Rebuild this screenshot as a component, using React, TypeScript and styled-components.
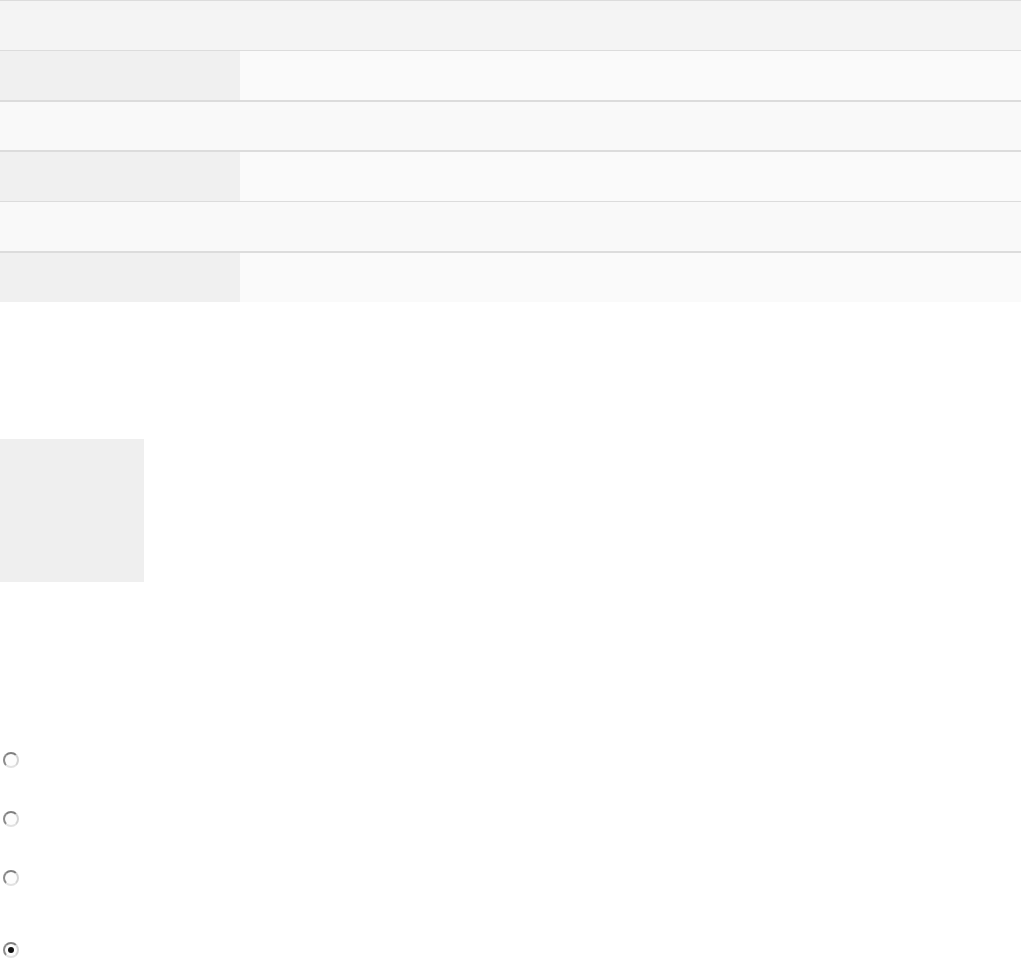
import React from "react";
import styled, { createGlobalStyle } from "styled-components";

const Global = createGlobalStyle`
    html, body {
        margin: 0;
        padding: 0;
        background: #ffffff;
        font-family: "Liberation Sans", Arial, sans-serif;
    }
`

const Page = styled.div`
    display: flex;
    flex-direction: column;
`

const Table = styled.div`
    display: flex;
    flex-direction: column;
    border-top: 1px solid #dcdcdc;
`

const Row = styled.div<{ $h: number, $border: number }>`
    display: grid;
    grid-template-columns: 240px 1fr;
    height: ${p => p.$h}px;
    background: #fafafa;
    border-bottom: ${p => p.$border}px solid #dcdcdc;
`

const FullRow = styled.div<{ $h: number, $border: number, $bg: string }>`
    height: ${p => p.$h}px;
    background: ${p => p.$bg};
    border-bottom: ${p => p.$border}px solid #dcdcdc;
`

const Label = styled.div`
    background: #f0f0f0;
`

const Value = styled.div`
    background: #fafafa;
`

const Thumb = styled.div`
    width: 144px;
    height: 143px;
    margin-top: 137px;
    background: #efefef;
`

const Options = styled.div`
    display: flex;
    flex-direction: column;
    margin-top: 170px;
    padding-left: 3px;
`

const Option = styled.label<{ $gap: number }>`
    display: flex;
    align-items: center;
    height: 16px;
    margin-bottom: ${p => p.$gap}px;
`

const Radio = styled.span<{ $checked?: boolean }>`
    position: relative;
    box-sizing: border-box;
    width: 16px;
    height: 16px;
    border-radius: 50%;
    border: 2px solid;
    border-color: #808080 #d4d4d4 #e2e2e2 #8c8c8c;
    background: #fdfdfd;
    &::after {
        content: "";
        display: ${p => p.$checked ? "block" : "none"};
        position: absolute;
        left: 3px;
        top: 3px;
        width: 6px;
        height: 6px;
        border-radius: 50%;
        background: #111;
    }
`

const options = [
    { gap: 43, checked: false },
    { gap: 43, checked: false },
    { gap: 56, checked: false },
    { gap: 0, checked: true },
]

const App = () => <>
    <Global />
    <Page>
        <Table>
            <FullRow $h={49} $border={1} $bg="#f4f4f4" />
            <Row $h={49} $border={2}><Label /><Value /></Row>
            <FullRow $h={48} $border={2} $bg="#f9f9f9" />
            <Row $h={49} $border={1}><Label /><Value /></Row>
            <FullRow $h={49} $border={2} $bg="#f9f9f9" />
            <Row $h={49} $border={0}><Label /><Value /></Row>
        </Table>
        <Thumb />
        <Options>
            {options.map((o, i) =>
                <Option key={i} $gap={o.gap}>
                    <Radio $checked={o.checked} />
                </Option>)}
        </Options>
    </Page>
</>

export default App
